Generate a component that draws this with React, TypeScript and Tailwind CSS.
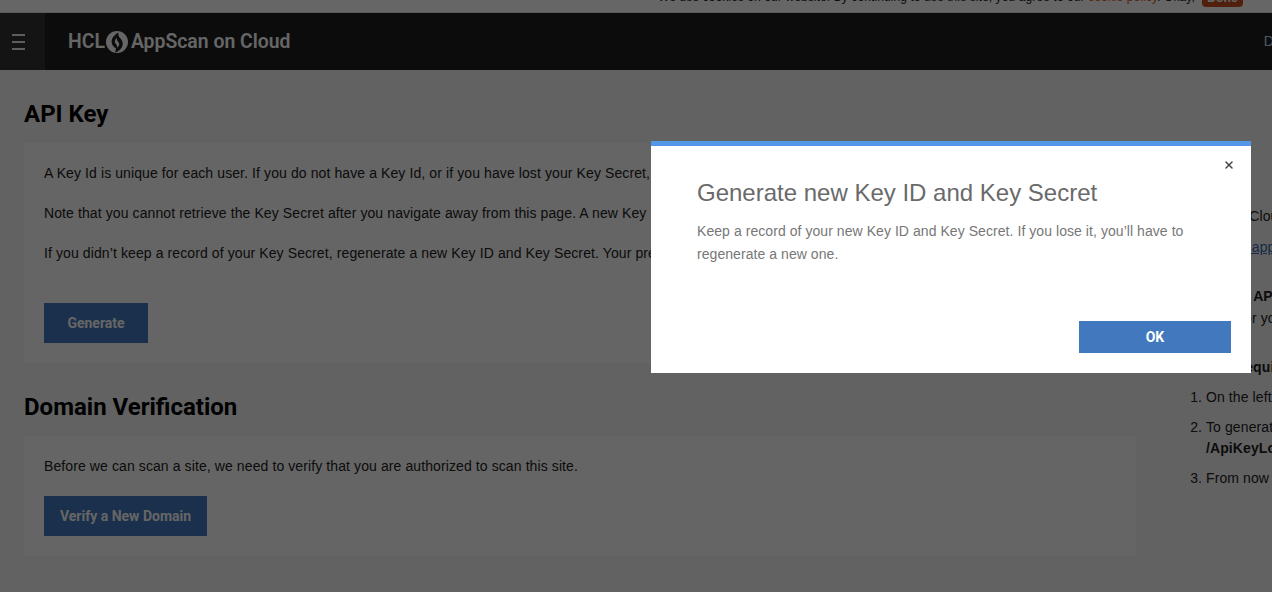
import React from 'react';
import { X } from 'lucide-react';

const arial = "font-['Liberation_Sans',Arial,sans-serif] tracking-[0.1px]";
const roboto = "font-['Roboto',sans-serif] tracking-normal";

const HclMark = () => (
  <svg width="22" height="22" viewBox="0 0 24 24" className="ml-[1px] mr-[3px] shrink-0">
    <circle cx="12" cy="12" r="12" fill="#ffffff" />
    <path
      d="M13.5 1.5c-3.8 2.4-7.4 5.6-7.4 10 0 3.6 2.2 6 4.8 7.4l-.9 4.6c3.6-1 8.2-4.6 8.2-9.6 0-3.4-1.8-5.2-3.6-7.2-.9-1.4-1.3-3-1.1-5.2z"
      fill="#1e1e1e"
    />
    <path d="M11.8 7c-1.4 1.8-2.4 3.2-2.2 5 .2 1.6 1.8 2.4 2.4 4 .2.8.1 1.6-.2 2.4 1.8-1 2.8-2.6 2.6-4.4-.2-1.8-1.8-2.8-2.4-4.2-.3-.8-.3-1.8-.2-2.8z" fill="#ffffff" />
  </svg>
);

const CookieBar = () => (
  <div className={`h-[13px] overflow-hidden bg-white border-b border-[#e4e4e4] flex justify-end items-end pr-[29px] text-[12px] text-[#222] ${arial}`}>
    <div className="flex items-end whitespace-nowrap">
      <span className="leading-[15px] mb-[7px]">
        We use cookies on our website. By continuing to use this site, you agree to our{' '}
        <a className="text-[#d9581a]">cookie policy</a>. Okay,
      </span>
      <span className="ml-[7px] mb-[5px] w-[41px] h-[18px] rounded-[4px] bg-[#c9521f] text-white font-bold text-center leading-[18px]">
        Done
      </span>
    </div>
  </div>
);

const TopBar = () => (
  <header className="h-[57px] bg-[#1e1e1e] flex items-stretch">
    <div className="w-[45px] bg-[#343434] flex flex-col items-start justify-center gap-[5px] pl-[12px]">
      <span className="w-[13px] h-[2px] bg-white/90" />
      <span className="w-[13px] h-[2px] bg-white/90" />
      <span className="w-[13px] h-[2px] bg-white/90" />
    </div>
    <div className={`flex items-center pl-[23px] pt-[1px] text-[19.4px] font-semibold text-white ${roboto}`}>
      <span>HCL</span>
      <HclMark />
      <span>AppScan on Cloud</span>
    </div>
    <span className={`ml-auto mr-[-2px] self-center text-[14px] text-[#c8dcf0] ${arial}`}>D</span>
  </header>
);

const Section = ({ title, children }: { title: string; children: React.ReactNode }) => (
  <section>
    <h1 className={`text-[24px] leading-[32px] font-bold text-black mb-[13px] ${roboto}`}>{title}</h1>
    <div className="bg-[#fcfcfc] px-[20px] pt-[20px] pb-[20px]">{children}</div>
  </section>
);

const PrimaryButton = ({ label, w }: { label: string; w: string }) => (
  <button className={`${w} h-[40px] bg-[#4178be] text-white text-[14px] font-bold ${roboto}`}>{label}</button>
);

const Steps = () => (
  <aside className={`w-[300px] shrink-0 ml-[30px] pt-[108px] text-[14px] text-[#222] whitespace-nowrap ${arial}`}>
    <p className="leading-[20px] pl-[2px]">AppScan on Cloud</p>
    <p className="leading-[20px] mt-[11px] pl-[5px] text-[#3b6db0] underline">https://cloud.appscan.com</p>
    <p className="leading-[20px] mt-[29px] pl-[19px] font-bold">Using the API</p>
    <p className="leading-[20px] mt-[2px] pl-[74px]">for your</p>
    <p className="leading-[20px] mt-[29px] pl-[69px] font-bold">Required</p>
    <ol className="list-decimal pl-[40px] mt-[10px]">
      <li className="leading-[20px]">On the left</li>
      <li className="leading-[21px] mt-[10px]">
        To generate
        <br />
        <b>/ApiKeyLogin</b>
      </li>
      <li className="leading-[20px] mt-[9px]">From now on</li>
    </ol>
  </aside>
);

export default function App() {
  return (
    <div className="relative w-[1272px] h-[592px] overflow-hidden bg-[#f5f5f5]">
      <CookieBar />
      <TopBar />
      <main className="flex pl-[24px] pt-[28px]">
        <div className={`w-[1112px] shrink-0 flex flex-col gap-[28px] text-[14px] text-[#222] ${arial}`}>
          <Section title="API Key">
            <div className="whitespace-nowrap leading-[20px] flex flex-col gap-[20px]">
              <p>A Key Id is unique for each user. If you do not have a Key Id, or if you have lost your Key Secret, generate a new one.</p>
              <p>Note that you cannot retrieve the Key Secret after you navigate away from this page. A new Key ID replaces the old.</p>
              <p>If you didn’t keep a record of your Key Secret, regenerate a new Key ID and Key Secret. Your previous key is revoked.</p>
            </div>
            <div className="mt-[40px]">
              <PrimaryButton label="Generate" w="w-[104px]" />
            </div>
          </Section>
          <Section title="Domain Verification">
            <p className="leading-[20px]">Before we can scan a site, we need to verify that you are authorized to scan this site.</p>
            <div className="mt-[20px]">
              <PrimaryButton label="Verify a New Domain" w="w-[163px]" />
            </div>
          </Section>
        </div>
        <Steps />
      </main>

      <div className="absolute inset-0 bg-black/60" />

      <div className={`absolute left-[651px] top-[141px] w-[600px] h-[232px] bg-white border-t-[5px] border-[#5596e6] pl-[46px] pr-[20px] flex flex-col ${arial}`}>
        <button className="absolute right-[16px] top-[13px] text-[#444]">
          <X size={12} strokeWidth={3} />
        </button>
        <h2 className="mt-[33px] text-[24px] leading-[28px] tracking-normal text-[#6a6a6a]">Generate new Key ID and Key Secret</h2>
        <p className="mt-[13px] w-[510px] text-[14px] leading-[23px] tracking-[0.06px] text-[#777]">
          Keep a record of your new Key ID and Key Secret. If you lose it, you’ll have to regenerate a new one.
        </p>
        <div className="mt-auto mb-[20px] flex justify-end">
          <button className={`w-[152px] h-[32px] bg-[#4178be] text-white text-[14px] font-bold ${roboto}`}>OK</button>
        </div>
      </div>
    </div>
  );
}
